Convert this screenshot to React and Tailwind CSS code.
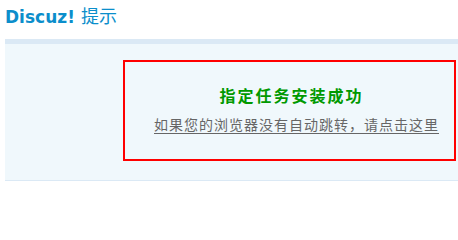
export default function App() {
  return (
    <div className="w-[458px] h-[200px] bg-white overflow-hidden font-['Noto_Sans_CJK_SC',sans-serif]">
      {/* Title */}
      <h3 className="pl-[5px] pt-[5px] h-[39px] text-[17px] leading-[21px] text-[#0b8ecb]">
        <span className="font-bold font-['DejaVu_Sans','Noto_Sans_CJK_SC',sans-serif]">Discuz!</span>
        <span className="ml-[6px] text-[18px]">提示</span>
      </h3>

      {/* Message panel */}
      <div className="ml-[5px] h-[142px] border-t-[5px] border-b border-[#dbe9f5] bg-[#f0f8fc] pt-[16px]">
        <div className="ml-[118px] w-[333px] h-[101px] border-2 border-[#ff0000] flex flex-col items-center pt-[23px]">
          <p className="ml-[4px] text-[16px] leading-[20px] font-bold tracking-[2px] text-[#009900]">
            指定任务安装成功
          </p>
          <a
            href="#"
            className="mt-[10px] ml-[14px] text-[14px] leading-[18px] tracking-[1px] text-[#666] underline underline-offset-[3px]"
          >
            如果您的浏览器没有自动跳转，请点击这里
          </a>
        </div>
      </div>
    </div>
  );
}
